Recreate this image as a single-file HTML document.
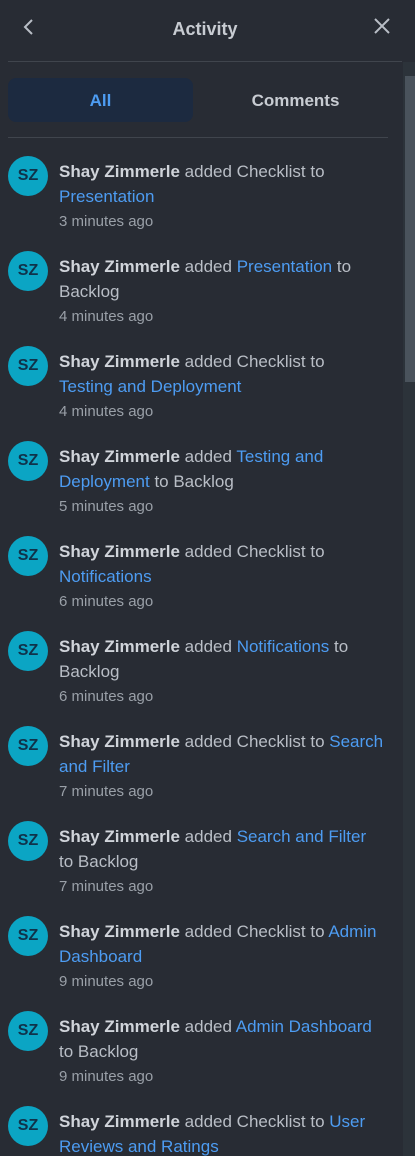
<!DOCTYPE html><html><head><style>
html,body{margin:0;width:415px;height:1156px;overflow:hidden}
body{background:#282c34;font-family:"Liberation Sans",sans-serif;position:relative}
.hdr{position:absolute;top:0;left:0;width:415px;height:60px}
.title{position:absolute;top:19px;left:0;width:410px;text-align:center;color:#c8ccd2;font-weight:bold;font-size:18px}
.line{position:absolute;height:1px;background:#40454d}
.sb{position:absolute;left:403px;top:62px;width:12px;height:1094px;background:#2c333a}
.thumb{position:absolute;left:405px;top:76px;width:10px;height:306px;background:#4a535c}
.tab{position:absolute;height:44px;text-align:center;font-weight:bold;font-size:17px}
.item{position:absolute;left:8px;width:385px}
.av{position:absolute;left:0;top:0;width:40px;height:40px;border-radius:50%;background:#0ba5c4;color:#10324a;font-weight:bold;font-size:16px;text-align:center;line-height:40px}
.tx{position:absolute;left:51px;top:3px;width:334px;font-size:17px;line-height:25px;color:#b9bec6;white-space:nowrap}
.tx b{color:#d0d4da}
.tx a{color:#4d9cf2}
.tm{font-size:15px;color:#9aa0a8;line-height:22px;margin-top:2px}
</style></head><body>
<div class="hdr">
<svg style="position:absolute;left:20px;top:17px" width="16" height="20"><path d="M12 3 L5 10 L12 17" stroke="#b9bec6" stroke-width="2" fill="none"/></svg>
<div class="title">Activity</div>
<svg style="position:absolute;left:373px;top:17px" width="18" height="18"><path d="M2 2 L16 16 M16 2 L2 16" stroke="#b9bec6" stroke-width="2" fill="none"/></svg>
</div>
<div class="line" style="left:8px;top:61px;width:394px"></div>
<div class="sb"></div><div class="thumb"></div>
<div class="tab" style="left:8px;top:78px;width:185px;background:#1c2a40;border-radius:8px;color:#4d9cf2;line-height:46px">All</div>
<div class="tab" style="left:203px;top:78px;width:185px;color:#c8ccd2;line-height:46px">Comments</div>
<div class="line" style="left:8px;top:137px;width:380px"></div>

<div class="item" style="top:156px"><div class="av">SZ</div><div class="tx"><b>Shay Zimmerle</b> added Checklist to<br><a>Presentation</a><div class="tm">3 minutes ago</div></div></div>
<div class="item" style="top:251px"><div class="av">SZ</div><div class="tx"><b>Shay Zimmerle</b> added <a>Presentation</a> to<br>Backlog<div class="tm">4 minutes ago</div></div></div>
<div class="item" style="top:346px"><div class="av">SZ</div><div class="tx"><b>Shay Zimmerle</b> added Checklist to<br><a>Testing and Deployment</a><div class="tm">4 minutes ago</div></div></div>
<div class="item" style="top:441px"><div class="av">SZ</div><div class="tx"><b>Shay Zimmerle</b> added <a>Testing and<br>Deployment</a> to Backlog<div class="tm">5 minutes ago</div></div></div>
<div class="item" style="top:536px"><div class="av">SZ</div><div class="tx"><b>Shay Zimmerle</b> added Checklist to<br><a>Notifications</a><div class="tm">6 minutes ago</div></div></div>
<div class="item" style="top:631px"><div class="av">SZ</div><div class="tx"><b>Shay Zimmerle</b> added <a>Notifications</a> to<br>Backlog<div class="tm">6 minutes ago</div></div></div>
<div class="item" style="top:726px"><div class="av">SZ</div><div class="tx"><b>Shay Zimmerle</b> added Checklist to <a>Search<br>and Filter</a><div class="tm">7 minutes ago</div></div></div>
<div class="item" style="top:821px"><div class="av">SZ</div><div class="tx"><b>Shay Zimmerle</b> added <a>Search and Filter</a><br>to Backlog<div class="tm">7 minutes ago</div></div></div>
<div class="item" style="top:916px"><div class="av">SZ</div><div class="tx"><b>Shay Zimmerle</b> added Checklist to <a>Admin<br>Dashboard</a><div class="tm">9 minutes ago</div></div></div>
<div class="item" style="top:1011px"><div class="av">SZ</div><div class="tx"><b>Shay Zimmerle</b> added <a>Admin Dashboard</a><br>to Backlog<div class="tm">9 minutes ago</div></div></div>
<div class="item" style="top:1106px"><div class="av">SZ</div><div class="tx"><b>Shay Zimmerle</b> added Checklist to <a>User<br>Reviews and Ratings</a><div class="tm">10 minutes ago</div></div></div>
</body></html>
